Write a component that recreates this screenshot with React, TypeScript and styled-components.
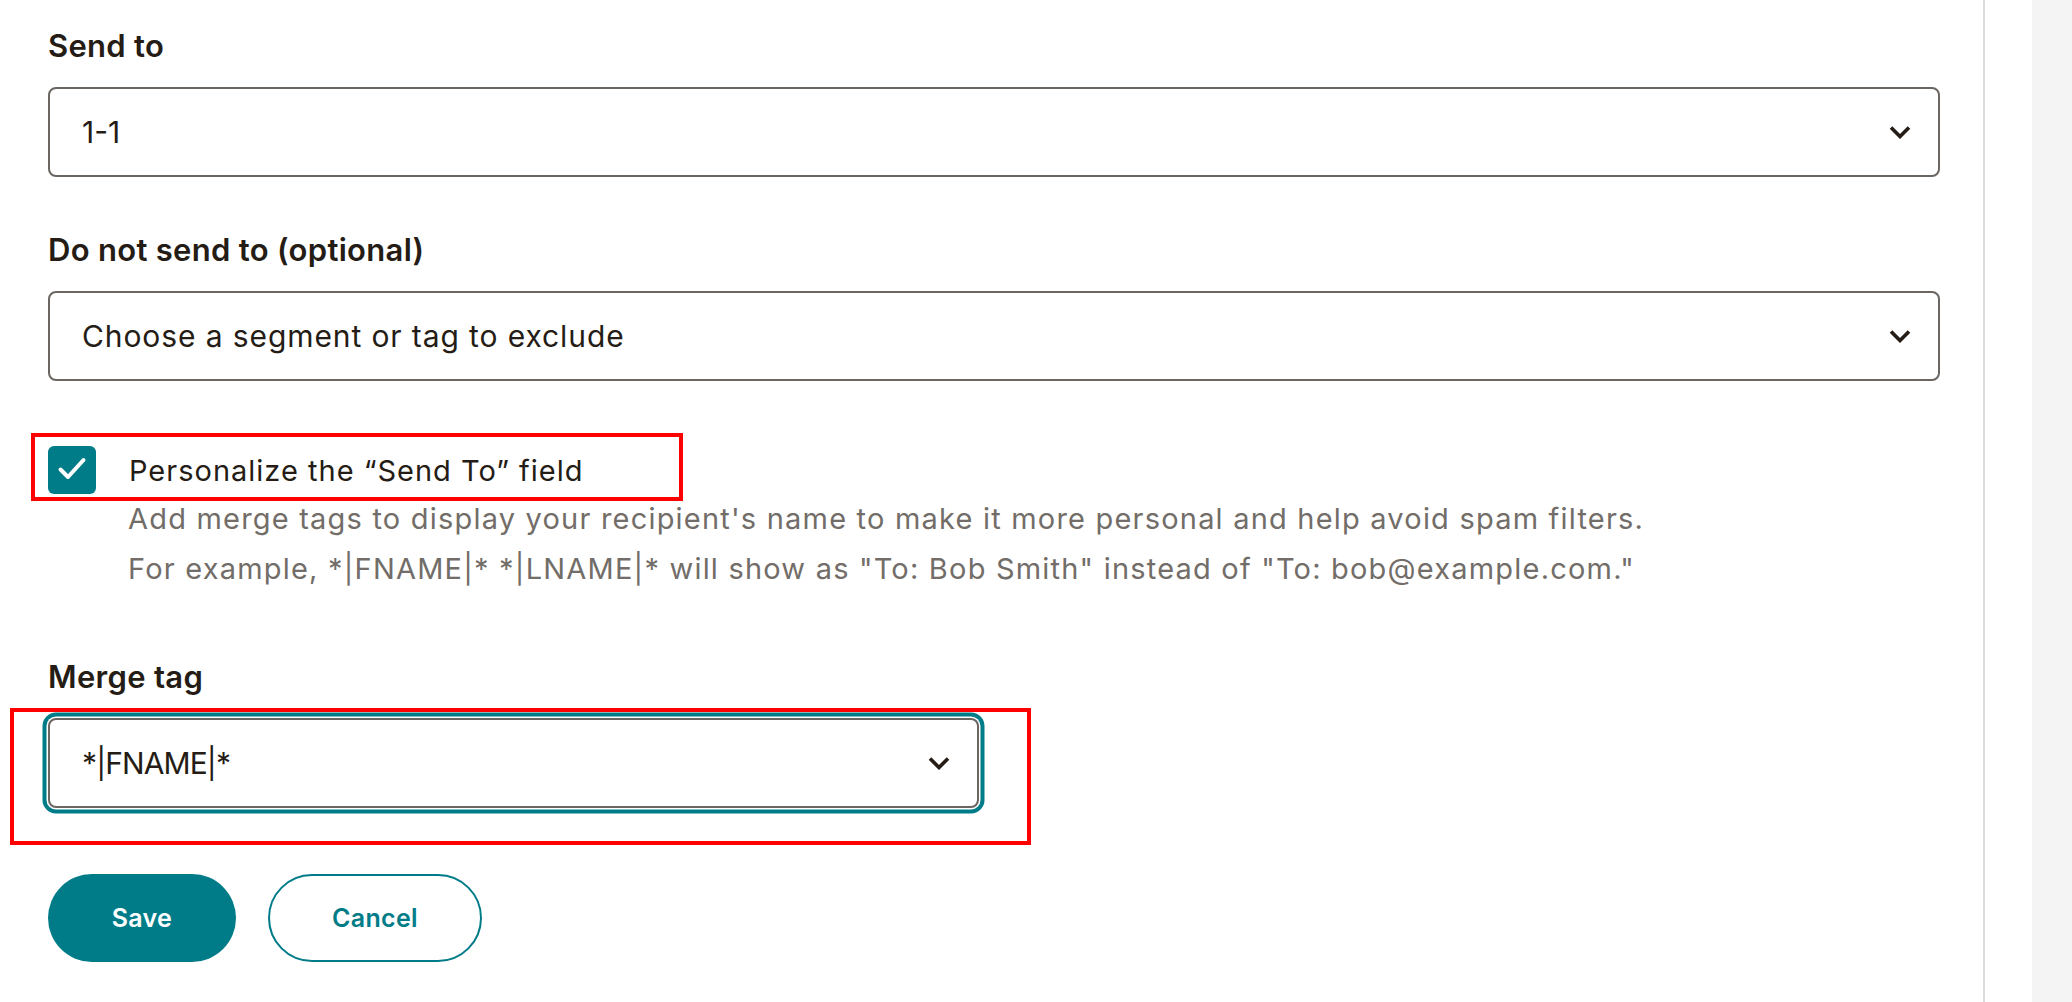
import React from 'react';
import styled, { createGlobalStyle } from 'styled-components';

const GlobalStyle = createGlobalStyle`
  html, body {
    margin: 0;
    padding: 0;
    background: #ffffff;
  }
  body {
    font-family: Inter, "Noto Sans", "Liberation Sans", sans-serif;
    color: #241c15;
  }
  * {
    box-sizing: border-box;
  }
`;

const TEAL = '#007c89';

function Chevron() {
  return (
    <svg width="22" height="14" viewBox="0 0 22 14" fill="none">
      <polyline
        points="2,2.5 11,11.5 20,2.5"
        stroke="#241c15"
        strokeWidth="3.6"
        strokeLinecap="butt"
        strokeLinejoin="miter"
      />
    </svg>
  );
}

function CheckMark() {
  return (
    <svg width="48" height="48" viewBox="0 0 48 48" fill="none">
      <polyline
        points="12.5,23.5 20,31 35.5,14"
        stroke="#ffffff"
        strokeWidth="4"
        strokeLinecap="round"
        strokeLinejoin="round"
      />
    </svg>
  );
}

type SelectProps = {
  value: string;
  width?: number;
  focused?: boolean;
  spacing?: number;
};

function SelectField(props: SelectProps) {
  return (
    <SelectBox $width={props.width} $focused={props.focused}>
      <SelectValue $spacing={props.spacing ?? 0.9}>{props.value}</SelectValue>
      <Chevron />
    </SelectBox>
  );
}

export default function App() {
  return (
    <>
      <GlobalStyle />
      <Page>
        <Main>
          <Label>Send to</Label>
          <SelectField value="1-1" spacing={0} />

          <Label $gap={53}>Do not send to (optional)</Label>
          <SelectField value="Choose a segment or tag to exclude" />

          <CheckRow>
            <CheckBox>
              <CheckMark />
            </CheckBox>
            <CheckTitle>Personalize the “Send To” field</CheckTitle>
            <Annotation $left={-17} $top={-13} $width={652} $height={68} />
          </CheckRow>
          <Description>
            <p>
              Add merge tags to display your recipient's name to make it more
              personal and help avoid spam filters.
            </p>
            <p>
              For example, *|FNAME|* *|LNAME|* will show as "To: Bob Smith"
              instead of "To: bob@example.com."
            </p>
          </Description>

          <Label $gap={63}>Merge tag</Label>
          <MergeWrap>
            <SelectField value="*|FNAME|*" width={931} focused spacing={-0.9} />
            <Annotation $left={-38} $top={-10} $width={1021} $height={137} />
          </MergeWrap>

          <Buttons>
            <PrimaryButton>Save</PrimaryButton>
            <SecondaryButton>Cancel</SecondaryButton>
          </Buttons>
        </Main>
        <Gutter />
        <Aside />
      </Page>
    </>
  );
}

const Page = styled.div`
  display: flex;
  flex-direction: row;
  width: 100%;
  height: 100vh;
  overflow: hidden;
`;

const Main = styled.main`
  width: 1985px;
  flex-shrink: 0;
  display: flex;
  flex-direction: column;
  padding: 26px 43px 0 48px;
  border-right: 2px solid #dcdcdc;
`;

const Gutter = styled.div`
  width: 47px;
  flex-shrink: 0;
  background: #ffffff;
`;

const Aside = styled.aside`
  flex: 1;
  background: #f4f4f4;
`;

const Label = styled.label<{ $gap?: number }>`
  display: block;
  font-size: 31px;
  font-weight: 600;
  line-height: 40px;
  letter-spacing: 0.3px;
  color: #241c15;
  margin-top: ${(p) => p.$gap ?? 0}px;
  margin-bottom: 21px;
`;

const SelectBox = styled.div<{ $width?: number; $focused?: boolean }>`
  display: flex;
  align-items: center;
  justify-content: space-between;
  width: ${(p) => (p.$width ? `${p.$width}px` : '100%')};
  height: 90px;
  padding: 0 27px 0 32px;
  border: 2px solid #6b6661;
  border-radius: 8px;
  background: #ffffff;
  box-shadow: ${(p) =>
    p.$focused ? `0 0 0 1.5px #ffffff, 0 0 0 5.5px ${TEAL}` : 'none'};
`;

const SelectValue = styled.span<{ $spacing: number }>`
  font-size: 30px;
  font-weight: 400;
  color: #241c15;
  letter-spacing: ${(p) => p.$spacing}px;
`;

const CheckRow = styled.div`
  position: relative;
  display: flex;
  flex-direction: row;
  align-items: center;
  gap: 33px;
  height: 48px;
  margin-top: 65px;
`;

const CheckBox = styled.span`
  display: flex;
  width: 48px;
  height: 48px;
  border-radius: 6px;
  background: ${TEAL};
`;

const CheckTitle = styled.span`
  font-size: 29px;
  font-weight: 400;
  color: #241c15;
  letter-spacing: 1px;
`;

const Description = styled.div`
  padding-left: 80px;
  color: #726d68;
  font-size: 29px;
  line-height: 50px;
  letter-spacing: 1.2px;

  p {
    margin: 0;
  }
`;

const MergeWrap = styled.div`
  position: relative;
  width: 931px;
`;

const Annotation = styled.div<{
  $left: number;
  $top: number;
  $width: number;
  $height: number;
}>`
  position: absolute;
  left: ${(p) => p.$left}px;
  top: ${(p) => p.$top}px;
  width: ${(p) => p.$width}px;
  height: ${(p) => p.$height}px;
  border: 4px solid #ff0000;
  pointer-events: none;
`;

const Buttons = styled.div`
  display: flex;
  flex-direction: row;
  gap: 32px;
  margin-top: 66px;
`;

const PrimaryButton = styled.button`
  width: 188px;
  height: 88px;
  border-radius: 44px;
  border: none;
  background: ${TEAL};
  color: #ffffff;
  font-family: Inter, "Liberation Sans", sans-serif;
  font-size: 25px;
  font-weight: 600;
  letter-spacing: 0.3px;
`;

const SecondaryButton = styled.button`
  width: 214px;
  height: 88px;
  border-radius: 44px;
  border: 2px solid ${TEAL};
  background: #ffffff;
  color: ${TEAL};
  font-family: Inter, "Liberation Sans", sans-serif;
  font-size: 25px;
  font-weight: 600;
  letter-spacing: 0.3px;
`;
